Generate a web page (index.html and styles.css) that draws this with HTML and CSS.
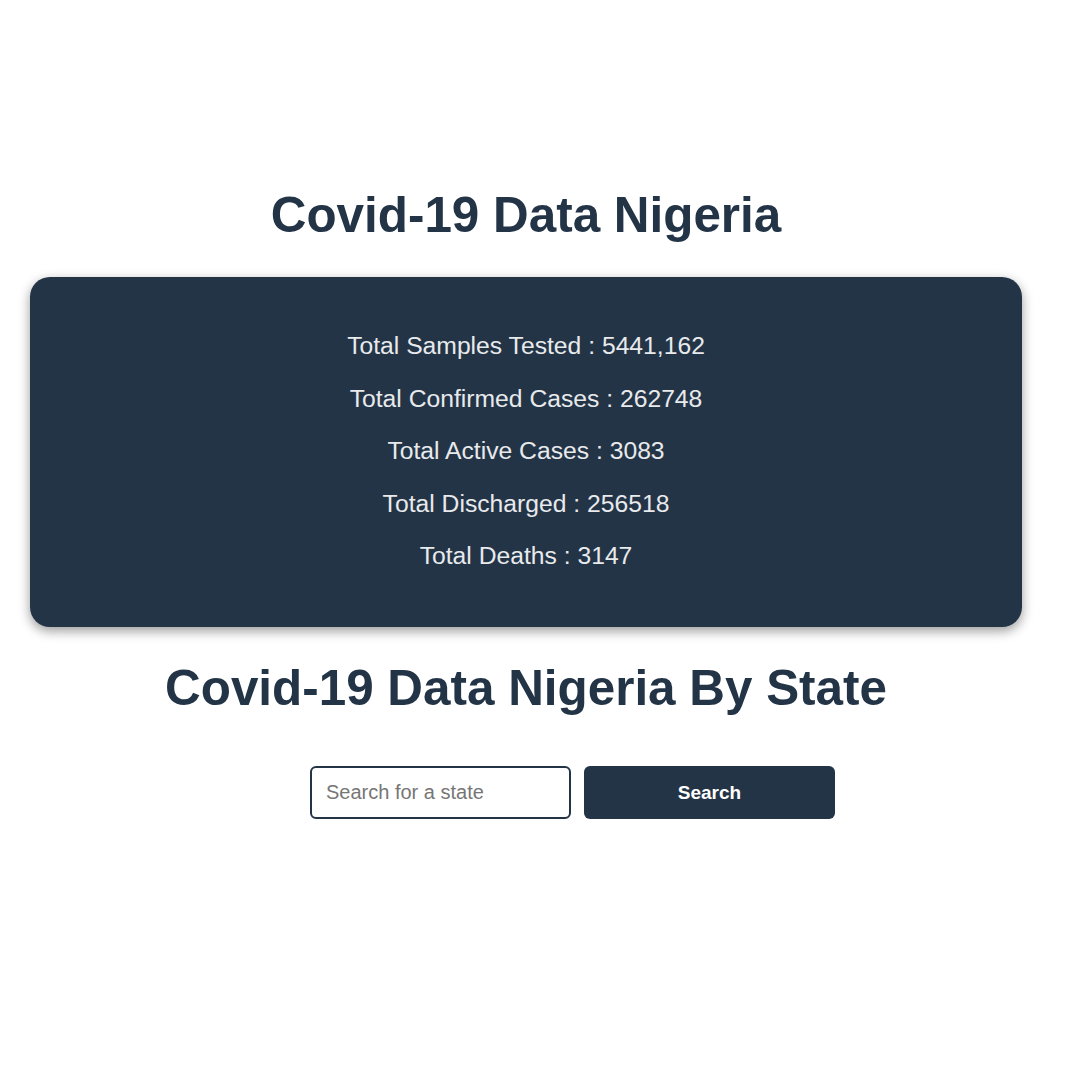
FILE: index.html
```html
<!DOCTYPE html>
<html lang="en">
<head>
<meta charset="utf-8">
<title>Covid-19 Data Nigeria</title>
<link rel="stylesheet" href="styles.css">
</head>
<body>
<main class="page">
  <h1 class="title">Covid-19 Data Nigeria</h1>
  <section class="card">
    <p class="stat">Total Samples Tested : 5441,162</p>
    <p class="stat">Total Confirmed Cases : 262748</p>
    <p class="stat">Total Active Cases : 3083</p>
    <p class="stat">Total Discharged : 256518</p>
    <p class="stat">Total Deaths : 3147</p>
  </section>
  <h2 class="title title-state">Covid-19 Data Nigeria By State</h2>
  <form class="search">
    <input class="search-input" type="text" placeholder="Search for a state">
    <button class="search-btn" type="button">Search</button>
  </form>
</main>
</body>
</html>
```

FILE: styles.css
```css
html, body {
  margin: 0;
  padding: 0;
  background: #ffffff;
}

body {
  font-family: "Liberation Sans", Arial, sans-serif;
  color: #233447;
}

.page {
  width: 1052px;
  padding-top: 187px;
  display: flex;
  flex-direction: column;
  align-items: center;
}

.title {
  margin: 0;
  font-size: 49.4px;
  line-height: 56px;
  font-weight: 700;
  color: #233447;
  text-align: center;
}

.card {
  box-sizing: border-box;
  width: 992px;
  margin-top: 34px;
  padding: 55px 0 57px;
  background: #233447;
  border-radius: 20px;
  box-shadow: 0 4px 12px rgba(0, 0, 0, 0.4);
  display: flex;
  flex-direction: column;
  align-items: center;
  gap: 24.5px;
}

.stat {
  margin: 0;
  font-size: 24.7px;
  line-height: 28px;
  color: #e8eaec;
}

.title-state {
  margin-top: 33px;
}

.search {
  margin-top: 50px;
  padding-left: 93px;
  display: flex;
  gap: 13px;
}

.search-input {
  box-sizing: border-box;
  width: 261px;
  height: 53px;
  padding: 0 14px;
  border: 2px solid #233447;
  border-radius: 6px;
  font-family: "Liberation Sans", Arial, sans-serif;
  font-size: 20px;
  color: #233447;
  outline: none;
}

.search-input::placeholder {
  color: #767676;
}

.search-btn {
  box-sizing: border-box;
  width: 251px;
  height: 53px;
  border: none;
  border-radius: 6px;
  background: #233447;
  color: #ffffff;
  font-family: "Liberation Sans", Arial, sans-serif;
  font-size: 19px;
  font-weight: 700;
  cursor: pointer;
}
```
